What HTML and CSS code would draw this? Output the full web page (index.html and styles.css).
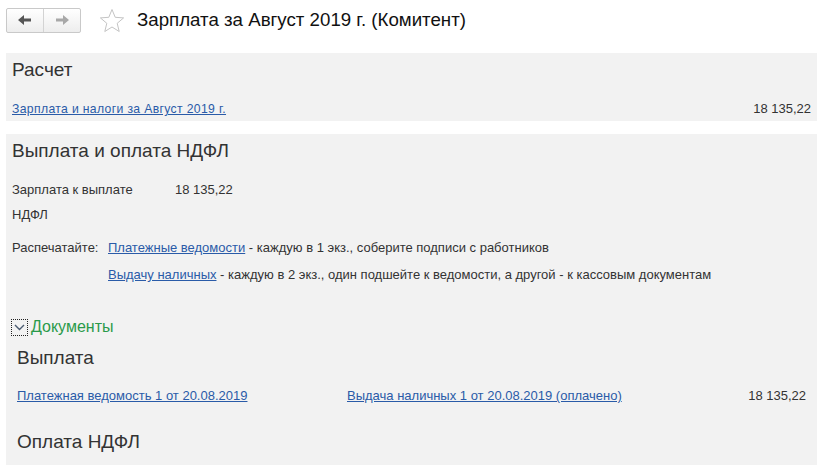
FILE: index.html
```html
<!DOCTYPE html>
<html lang="ru">
<head>
  <meta charset="UTF-8">
  <title>Зарплата за Август 2019 г. (Комитент)</title>
  <link rel="stylesheet" href="styles.css">
</head>
<body>

  <div class="head">
    <div class="navbtns">
      <span class="navbtn">
        <svg width="14" height="10" viewBox="0 0 14 10"><path d="M0 5 L6 0 L6 3.5 L13 3.5 L13 6.5 L6 6.5 L6 10 Z" fill="#555"/></svg>
      </span>
      <span class="navbtn">
        <svg width="14" height="10" viewBox="0 0 14 10"><path d="M14 5 L8 0 L8 3.5 L1 3.5 L1 6.5 L8 6.5 L8 10 Z" fill="#a8a8a8"/></svg>
      </span>
    </div>
    <svg class="star" width="26" height="25" viewBox="0 0 26 25"><path d="M13 1.5 L16.2 9.3 L24.6 9.9 L18.2 15.3 L20.2 23.5 L13 19 L5.8 23.5 L7.8 15.3 L1.4 9.9 L9.8 9.3 Z" fill="none" stroke="#c4c4c4" stroke-width="1"/></svg>
    <h1>Зарплата за Август 2019 г. (Комитент)</h1>
  </div>

  <!-- Расчет -->
  <div class="panel calc">
    <h2>Расчет</h2>
    <div class="row">
      <a href="#">Зарплата и налоги за Август 2019 г.</a>
      <span class="sum">18 135,22</span>
    </div>
  </div>

  <!-- Выплата -->
  <div class="panel pay">
    <h2>Выплата и оплата НДФЛ</h2>
    <div class="field"><span class="label">Зарплата к выплате</span><span>18 135,22</span></div>
    <div class="field"><span class="label">НДФЛ</span></div>

    <div class="print">
      <span class="plabel">Распечатайте:</span>
      <div class="plines">
        <div><a href="#">Платежные ведомости</a> - каждую в 1 экз., соберите подписи с работников</div>
        <div><a href="#">Выдачу наличных</a> - каждую в 2 экз., один подшейте к ведомости, а другой - к кассовым документам</div>
      </div>
    </div>

    <div class="group">
      <span class="toggle">
        <svg width="11" height="7" viewBox="0 0 11 7"><path d="M1 1 L5.5 5.5 L10 1" fill="none" stroke="#4a5a70" stroke-width="1.4"/></svg>
      </span>
      <span class="gtitle">Документы</span>
    </div>

    <div class="docs">
      <h2>Выплата</h2>
      <div class="docrow">
        <a class="doc1" href="#">Платежная ведомость 1 от 20.08.2019</a>
        <a href="#">Выдача наличных 1 от 20.08.2019 (оплачено)</a>
        <span class="sum">18 135,22</span>
      </div>
      <h2 class="ndfl">Оплата НДФЛ</h2>
    </div>
  </div>

</body>
</html>
```

FILE: styles.css
```css
body {
  margin: 0;
  background: #fff;
  color: #333;
  font-family: "Liberation Sans", Arial, sans-serif;
  font-size: 13px;
  overflow: hidden;
}

a {
  color: #2a5ba8;
  text-decoration: underline;
}

.head {
  display: flex;
  align-items: center;
  height: 40px;
  padding: 0 0 0 6px;
}

.navbtns {
  display: flex;
  border: 1px solid #c9c9c9;
  border-radius: 2px;
  background: linear-gradient(#fff, #ededed);
}

.navbtn {
  display: flex;
  align-items: center;
  justify-content: center;
  width: 36px;
  height: 23px;
}

.navbtn + .navbtn {
  border-left: 1px solid #d3d3d3;
}

.star {
  margin-left: 18px;
}

h1 {
  margin: 0 0 0 12px;
  font-size: 18.7px;
  font-weight: normal;
  color: #111;
}

.panel {
  margin: 13px 0 0 6px;
  background: #f2f2f2;
  padding: 5px 6px 4px 6px;
}

h2 {
  margin: 0;
  font-size: 19px;
  font-weight: normal;
  color: #333;
  line-height: 24px;
}

.row {
  display: flex;
  justify-content: space-between;
  margin-top: 19px;
  line-height: 16px;
}

.row a {
  font-size: 12.2px;
  letter-spacing: 0.35px;
}

.pay {
  height: 322px;
  overflow: hidden;
}

.field {
  display: flex;
  margin-top: 10px;
  line-height: 15px;
}

.pay h2 + .field {
  margin-top: 19px;
}

.label {
  width: 163px;
}

.print {
  display: flex;
  margin-top: 18px;
  line-height: 15px;
}

.plabel {
  width: 96px;
}

.plines div + div {
  margin-top: 12px;
}

.group {
  display: flex;
  align-items: center;
  margin: 36px 0 0 -1px;
}

.toggle {
  display: flex;
  align-items: center;
  justify-content: center;
  width: 15px;
  height: 15px;
  border: 1px dotted #222;
}

.gtitle {
  margin-left: 3px;
  font-size: 16px;
  color: #2a9a4a;
}

.docs {
  padding-left: 5px;
}

.docs h2 {
  margin-top: 10px;
}

.docrow {
  display: flex;
  margin-top: 18px;
  line-height: 16px;
}

.doc1 {
  width: 330px;
}

.docrow .sum {
  margin-left: auto;
  margin-right: 5px;
}

.docs .ndfl {
  margin-top: 26px;
}
```
